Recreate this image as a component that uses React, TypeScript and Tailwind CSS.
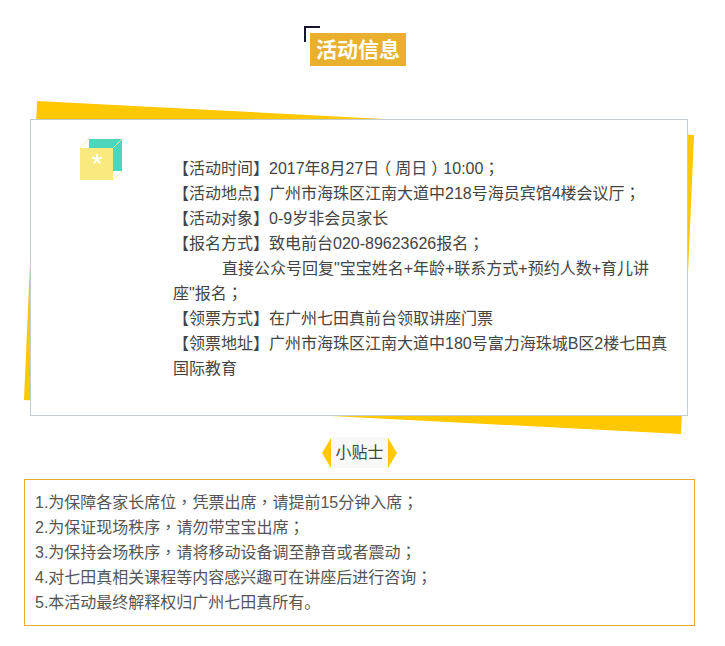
import React from "react";

const font = { fontFamily: '"Liberation Sans", "Noto Sans CJK SC", sans-serif' };
const centeredPunct = { fontFamily: '"Noto Sans CJK TC", sans-serif' };

const infoLines = [
  "【活动时间】2017年8月27日（周日）10:00；",
  "【活动地点】广州市海珠区江南大道中218号海员宾馆4楼会议厅；",
  "【活动对象】0-9岁非会员家长",
  "【报名方式】致电前台020-89623626报名；",
];

const tips = [
  "1.为保障各家长席位，凭票出席，请提前15分钟入席；",
  "2.为保证现场秩序，请勿带宝宝出席；",
  "3.为保持会场秩序，请将移动设备调至静音或者震动；",
  "4.对七田真相关课程等内容感兴趣可在讲座后进行咨询；",
  "5.本活动最终解释权归广州七田真所有。",
];

// the reference centres full-width punctuation in its cell
function Line({ text }: { text: string }) {
  return (
    <>
      {text.split(/([，；（）])/).map((part, i) => {
        if (part === "，" || part === "；") {
          return <span key={i} className="leading-none" style={centeredPunct}>{part}</span>;
        }
        if (part === "（" || part === "）") {
          return <span key={i} className="px-[4px] [font-feature-settings:'halt']">{part}</span>;
        }
        return <span key={i}>{part}</span>;
      })}
    </>
  );
}

function BoxIcon() {
  return (
    <svg width="44" height="44" viewBox="0 0 44 44" className="block">
      <rect x="9" y="3" width="33" height="32" fill="#4dd6bb" />
      <path d="M9 3 L0 12 M42 3 L33 12 M42 35 L33 44" stroke="#f9ec9a" strokeWidth="1" fill="none" />
      <rect x="0" y="12" width="33" height="32" fill="#f9ea80" />
      <path d="M17 18 V23 M17 23 L12 21.5 M17 23 L22 21.5 M17 23 L14 27.5 M17 23 L20 27.5" stroke="#fff" strokeWidth="2" fill="none" />
    </svg>
  );
}

export default function App() {
  return (
    <div className="w-[725px] h-[646px] bg-white overflow-hidden" style={font}>
      {/* Title */}
      <div className="pt-[26px] pl-[304px]">
        <div className="relative w-fit pt-[7px] pl-[6px]">
          <div className="absolute left-0 top-0 w-[16px] h-[16px] border-l-2 border-t-2 border-[#1a1433]" />
          <div className="relative w-[96px] h-[33px] bg-[#e9b02e] flex items-center justify-center text-white text-[21px] font-bold">
            活动信息
          </div>
        </div>
      </div>

      {/* Info card */}
      <div className="relative mt-[53px] ml-[30px] w-[658px] h-[297px]">
        <svg className="absolute left-[-6px] top-[-18px]" width="670" height="333" viewBox="0 0 670 333">
          <polygon points="13,0 670,34 657,333 0,299" fill="#ffc800" />
        </svg>
        <div className="relative h-full bg-white border border-[#c4ccd0] flex">
          <div className="w-[141px] shrink-0 pt-[16px] pl-[49px]">
            <BoxIcon />
          </div>
          <div className="pt-[36px] pl-[1px] pr-[17px] text-[16px] leading-[25px] text-[#444]">
            {infoLines.map((line) => (
              <p key={line}><Line text={line} /></p>
            ))}
            <p className="indent-[49px]">直接公众号回复"宝宝姓名+年龄+联系方式+预约人数+育儿讲</p>
            <p><Line text={'座"报名；'} /></p>
            <p>【领票方式】在广州七田真前台领取讲座门票</p>
            <p>【领票地址】广州市海珠区江南大道中180号富力海珠城B区2楼七田真国际教育</p>
          </div>
        </div>
      </div>

      {/* Tips label */}
      <div className="flex justify-center items-center mt-[21px] pr-[6px] h-[31px]">
        <div className="w-0 h-0 border-y-[15px] border-y-transparent border-r-[9px] border-r-[#ffc800]" />
        <div className="w-[57px] h-[31px] bg-[#f8f8f6] flex items-center justify-center text-[16px] text-[#444]">
          小贴士
        </div>
        <div className="w-0 h-0 border-y-[15px] border-y-transparent border-l-[9px] border-l-[#ffc800]" />
      </div>

      {/* Tips box */}
      <div className="mt-[11px] ml-[24px] w-[671px] h-[147px] border border-[#e5ab2c] px-[10px] pt-[10px] text-[16px] leading-[25px] text-[#555]">
        {tips.map((tip) => (
          <p key={tip}><Line text={tip} /></p>
        ))}
      </div>
    </div>
  );
}
